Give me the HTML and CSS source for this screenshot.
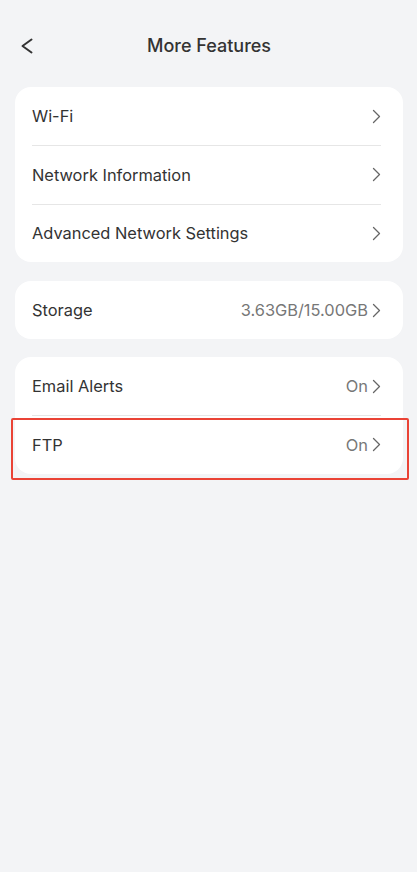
FILE: index.html
```html
<!DOCTYPE html>
<html lang="en">
<head>
<meta charset="utf-8">
<title>More Features</title>
<link rel="stylesheet" href="styles.css">
</head>
<body>
<div class="page">
  <header class="header">
    <span class="back">
      <svg width="14" height="16" viewBox="0 0 14 16"><path d="M11.5 1.5 L2.5 8 L11.5 14.5" fill="none" stroke="#333" stroke-width="2" stroke-linecap="round" stroke-linejoin="round"/></svg>
    </span>
    <h1 class="title">More Features</h1>
  </header>

  <section class="card card-network">
    <div class="row"><span class="label">Wi-Fi</span><span class="right"><svg class="chev" viewBox="0 0 9 15"><path d="M1.5 1.5 L7.5 7.5 L1.5 13.5" fill="none" stroke="#666" stroke-width="1.3" stroke-linecap="round" stroke-linejoin="round"/></svg></span></div>
    <div class="row"><span class="label">Network Information</span><span class="right"><svg class="chev" viewBox="0 0 9 15"><path d="M1.5 1.5 L7.5 7.5 L1.5 13.5" fill="none" stroke="#666" stroke-width="1.3" stroke-linecap="round" stroke-linejoin="round"/></svg></span></div>
    <div class="row"><span class="label">Advanced Network Settings</span><span class="right"><svg class="chev" viewBox="0 0 9 15"><path d="M1.5 1.5 L7.5 7.5 L1.5 13.5" fill="none" stroke="#666" stroke-width="1.3" stroke-linecap="round" stroke-linejoin="round"/></svg></span></div>
  </section>

  <section class="card card-storage">
    <div class="row"><span class="label">Storage</span><span class="right"><span class="value">3.63GB/15.00GB</span><svg class="chev" viewBox="0 0 9 15"><path d="M1.5 1.5 L7.5 7.5 L1.5 13.5" fill="none" stroke="#666" stroke-width="1.3" stroke-linecap="round" stroke-linejoin="round"/></svg></span></div>
  </section>

  <section class="card card-alerts">
    <div class="row"><span class="label">Email Alerts</span><span class="right"><span class="value">On</span><svg class="chev" viewBox="0 0 9 15"><path d="M1.5 1.5 L7.5 7.5 L1.5 13.5" fill="none" stroke="#666" stroke-width="1.3" stroke-linecap="round" stroke-linejoin="round"/></svg></span></div>
    <div class="row"><span class="label">FTP</span><span class="right"><span class="value">On</span><svg class="chev" viewBox="0 0 9 15"><path d="M1.5 1.5 L7.5 7.5 L1.5 13.5" fill="none" stroke="#666" stroke-width="1.3" stroke-linecap="round" stroke-linejoin="round"/></svg></span></div>
    <span class="highlight-box"></span>
  </section>
</div>
</body>
</html>
```

FILE: styles.css
```css
* { box-sizing: border-box; }
html, body {
  margin: 0;
  padding: 0;
  background: #f3f4f6;
}
body {
  font-family: Inter, "Noto Sans", "Liberation Sans", sans-serif;
  color: #333;
  min-height: 872px;
}
.page {
  padding: 0 14px 0 15px;
  display: flex;
  flex-direction: column;
}
.header {
  height: 68px;
  margin-bottom: 19px;
  display: flex;
  align-items: center;
  justify-content: center;
  position: relative;
  padding-top: 22px;
}
.back {
  position: absolute;
  left: 5px;
  top: 38px;
  width: 14px;
  height: 16px;
  display: flex;
}
.title {
  margin: 0;
  font-size: 18px;
  font-weight: 500;
  color: #333;
}
.card {
  background: #fff;
  border-radius: 16px;
  padding: 0 22px 0 17px;
  position: relative;
}
.card-network { margin-bottom: 19px; }
.card-storage { margin-bottom: 18px; }
.row {
  height: 58.5px;
  display: flex;
  align-items: center;
  justify-content: space-between;
  border-top: 1px solid #e6e6e6;
}
.row:first-child { border-top: none; height: 58px; }
.label {
  font-size: 16.4px;
  color: #333;
}
.right {
  display: flex;
  align-items: center;
  gap: 4px;
}
.value {
  font-size: 16.4px;
  color: #777;
}
.chev {
  width: 9px;
  height: 15px;
}
.highlight-box {
  position: absolute;
  left: -4px;
  right: -6px;
  top: 61px;
  bottom: -6px;
  border: 2.5px solid #ea4336;
  border-radius: 2px;
  pointer-events: none;
}
```
